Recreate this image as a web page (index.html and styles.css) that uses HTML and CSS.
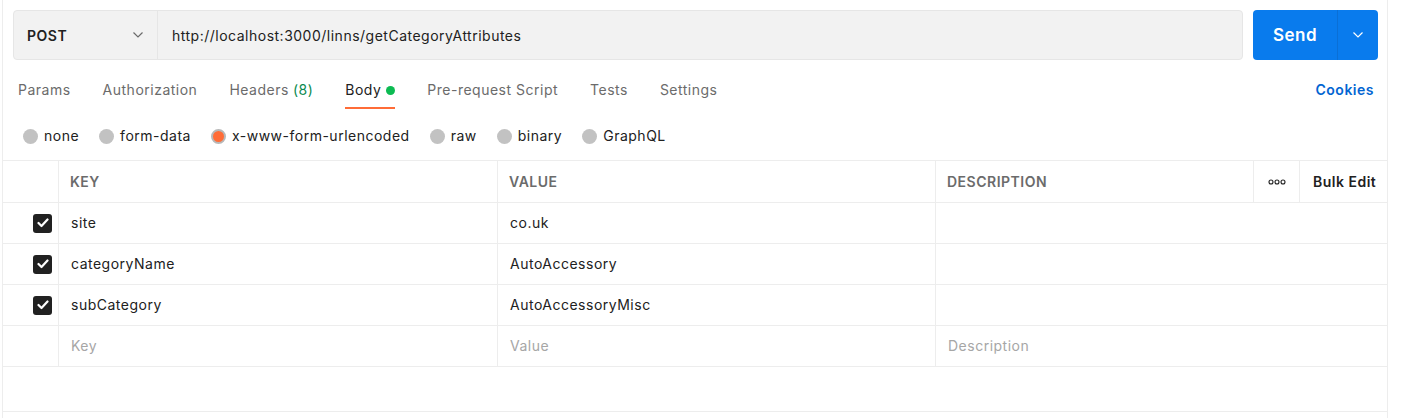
FILE: index.html
```html
<!DOCTYPE html>
<html lang="en">
<head>
<meta charset="utf-8">
<title>Request</title>
<link rel="stylesheet" href="styles.css">
</head>
<body>
<div class="pane">
  <div class="request-bar">
    <div class="url-group">
      <div class="method">
        <span class="method-name">POST</span>
        <svg class="chev" width="10" height="6" viewBox="0 0 10 6"><polyline points="0.5,0.5 5,5 9.5,0.5" fill="none" stroke="#6b6b6b" stroke-width="1.2"/></svg>
      </div>
      <div class="url">http://localhost:3000/linns/getCategoryAttributes</div>
    </div>
    <div class="send">
      <span class="send-label">Send</span>
      <span class="send-menu"><svg width="10" height="6" viewBox="0 0 10 6"><polyline points="0.5,0.5 5,5 9.5,0.5" fill="none" stroke="#ffffff" stroke-width="1.2"/></svg></span>
    </div>
  </div>

  <div class="tabs-row">
    <nav class="tabs">
      <span class="tab">Params</span>
      <span class="tab">Authorization</span>
      <span class="tab">Headers <span class="count">(8)</span></span>
      <span class="tab active">Body <span class="dot"></span></span>
      <span class="tab">Pre-request Script</span>
      <span class="tab">Tests</span>
      <span class="tab">Settings</span>
    </nav>
    <span class="cookies">Cookies</span>
  </div>

  <div class="radios">
    <span class="radio"><span class="circle"></span>none</span>
    <span class="radio"><span class="circle"></span>form-data</span>
    <span class="radio"><span class="circle selected"></span>x-www-form-urlencoded</span>
    <span class="radio"><span class="circle"></span>raw</span>
    <span class="radio"><span class="circle"></span>binary</span>
    <span class="radio"><span class="circle"></span>GraphQL</span>
  </div>

  <div class="table">
    <div class="row head">
      <div class="cell c-check"></div>
      <div class="cell c-key">KEY</div>
      <div class="cell c-value">VALUE</div>
      <div class="cell c-desc">DESCRIPTION</div>
      <div class="cell c-more"><svg width="18" height="6" viewBox="0 0 18 6"><circle cx="3" cy="3" r="2" fill="none" stroke="#212121" stroke-width="1.1"/><circle cx="9" cy="3" r="2" fill="none" stroke="#212121" stroke-width="1.1"/><circle cx="15" cy="3" r="2" fill="none" stroke="#212121" stroke-width="1.1"/></svg></div>
      <div class="cell c-bulk">Bulk Edit</div>
    </div>
    <div class="row">
      <div class="cell c-check"><span class="checkbox"><svg width="12" height="10" viewBox="0 0 12 10"><polyline points="1.5,5 4.5,8 10.5,1.5" fill="none" stroke="#fff" stroke-width="2.2" stroke-linecap="round" stroke-linejoin="round"/></svg></span></div>
      <div class="cell c-key">site</div>
      <div class="cell c-value">co.uk</div>
      <div class="cell c-desc-wide"></div>
    </div>
    <div class="row">
      <div class="cell c-check"><span class="checkbox"><svg width="12" height="10" viewBox="0 0 12 10"><polyline points="1.5,5 4.5,8 10.5,1.5" fill="none" stroke="#fff" stroke-width="2.2" stroke-linecap="round" stroke-linejoin="round"/></svg></span></div>
      <div class="cell c-key">categoryName</div>
      <div class="cell c-value">AutoAccessory</div>
      <div class="cell c-desc-wide"></div>
    </div>
    <div class="row">
      <div class="cell c-check"><span class="checkbox"><svg width="12" height="10" viewBox="0 0 12 10"><polyline points="1.5,5 4.5,8 10.5,1.5" fill="none" stroke="#fff" stroke-width="2.2" stroke-linecap="round" stroke-linejoin="round"/></svg></span></div>
      <div class="cell c-key">subCategory</div>
      <div class="cell c-value">AutoAccessoryMisc</div>
      <div class="cell c-desc-wide"></div>
    </div>
    <div class="row">
      <div class="cell c-check"></div>
      <div class="cell c-key placeholder">Key</div>
      <div class="cell c-value placeholder">Value</div>
      <div class="cell c-desc-wide placeholder">Description</div>
    </div>
    <div class="table-foot"></div>
  </div>
</div>
</body>
</html>
```

FILE: styles.css
```css
* { box-sizing: border-box; }

html, body {
  margin: 0;
  padding: 0;
  background: #ffffff;
}

body {
  font-family: Inter, "Noto Sans", "Liberation Sans", sans-serif;
  font-size: 14px;
  letter-spacing: 0.5px;
  color: #212121;
}

.pane {
  margin-left: 2px;
  width: 1386px;
  height: 418px;
  border-left: 1px solid #ededed;
  border-right: 1px solid #ededed;
}

/* request bar */
.request-bar {
  display: flex;
  gap: 10px;
  padding: 10px 9px 0 10px;
  height: 60px;
}

.url-group {
  flex: 1;
  display: flex;
  height: 50px;
  background: #f2f2f2;
  border: 1px solid #e6e6e6;
  border-radius: 4px;
}

.method {
  width: 144px;
  display: flex;
  align-items: center;
  justify-content: space-between;
  padding: 0 14px 0 13px;
  border-right: 1px solid #e6e6e6;
}

.method-name {
  font-weight: 600;
  font-size: 14px;
}

.chev { display: block; }

.url {
  display: flex;
  align-items: center;
  padding-left: 14px;
  font-size: 14px;
}

.send {
  width: 125px;
  height: 50px;
  display: flex;
  background: #097bed;
  border-radius: 4px;
  color: #ffffff;
}

.send-label {
  width: 84px;
  display: flex;
  align-items: center;
  justify-content: center;
  font-weight: 600;
  font-size: 17px;
}

.send-menu {
  flex: 1;
  display: flex;
  align-items: center;
  justify-content: center;
  border-left: 1px solid #0a6fd6;
}

.send-menu svg { display: block; }

/* tabs */
.tabs-row {
  display: flex;
  justify-content: space-between;
  align-items: flex-start;
  padding: 0 13px 0 15px;
}

.tabs {
  display: flex;
  gap: 32px;
}

.tab {
  display: flex;
  align-items: center;
  gap: 6px;
  padding-top: 20px;
  padding-bottom: 7px;
  line-height: 20px;
  color: #6b6b6b;
  border-bottom: 2px solid transparent;
}

.tab.active {
  color: #212121;
  border-bottom-color: #ff6c37;
}

.count { color: #0b8a4f; margin-left: -2px; }

.dot {
  width: 9px;
  height: 9px;
  border-radius: 50%;
  background: #0cbb52;
  margin-left: -1px;
}

.cookies {
  padding-top: 20px;
  line-height: 20px;
  font-weight: 600;
  color: #0265d2;
}

/* radios */
.radios {
  display: flex;
  gap: 20px;
  margin-top: 17px;
  margin-bottom: 14px;
  padding-left: 20px;
  height: 20px;
  align-items: center;
}

.radio {
  display: flex;
  align-items: center;
  gap: 6px;
  line-height: 20px;
}

.circle {
  width: 15px;
  height: 15px;
  border-radius: 50%;
  background: #c2c2c2;
}

.circle.selected {
  background: #ff6c37;
  border: 2px solid #b8b8b8;
}

/* table */
.table {
  border-top: 1px solid #ededed;
}

.row {
  display: flex;
  height: 41px;
  border-bottom: 1px solid #ededed;
}

.row.head { height: 42px; }

.cell {
  display: flex;
  align-items: center;
  border-right: 1px solid #ededed;
  padding-left: 12px;
  padding-bottom: 2px;
  white-space: nowrap;
}

.head .cell {
  padding-left: 11px;
  padding-bottom: 0;
  font-weight: 600;
  color: #6b6b6b;
}

.c-check {
  width: 56px;
  justify-content: flex-end;
  padding: 0 6px 0 0 !important;
}

.c-key { width: 439px; }
.c-value { width: 438px; }
.c-desc { width: 318px; }

.c-more {
  width: 46px;
  justify-content: center;
  padding: 0 !important;
}

.c-more svg { display: block; }

.c-bulk {
  flex: 1;
  border-right: none;
  padding-left: 13px !important;
  color: #212121 !important;
}

.c-desc-wide {
  flex: 1;
  border-right: none;
}

.placeholder { color: #a6a6a6; }

.checkbox {
  width: 19px;
  height: 19px;
  border-radius: 3px;
  background: #212121;
  display: flex;
  align-items: center;
  justify-content: center;
}

.checkbox svg { display: block; }

.table-foot {
  height: 45px;
  border-bottom: 1px solid #ededed;
}
```
